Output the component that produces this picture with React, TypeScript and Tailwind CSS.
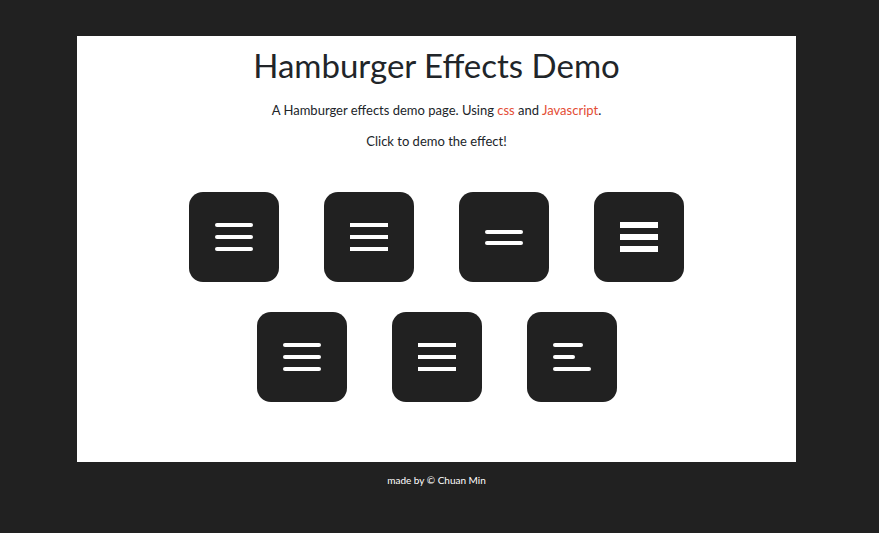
import React from "react";

type LineSpec = { w: number; h: number; rounded: boolean };

function Burger({ lines, gap }: { lines: LineSpec[]; gap: number }) {
  return (
    <button className="w-[90px] h-[90px] rounded-[14px] bg-[#212121] flex items-center justify-center">
      <div className="w-[38px] flex flex-col items-start" style={{ gap }}>
        {lines.map((l, i) => (
          <span
            key={i}
            className={l.rounded ? "block bg-white rounded-full" : "block bg-white"}
            style={{ width: l.w, height: l.h }}
          />
        ))}
      </div>
    </button>
  );
}

const r = (w = 38): LineSpec => ({ w, h: 4, rounded: true });
const s = (w = 38, h = 4): LineSpec => ({ w, h, rounded: false });

export default function App() {
  return (
    <div className="min-h-[533px] bg-[#212121]" style={{ fontFamily: 'Lato, "Noto Sans", sans-serif' }}>
      <div className="w-[873px] flex flex-col items-center pt-[36px]">
        <div className="w-[719px] h-[426px] bg-white flex flex-col items-center">
          <h1 className="mt-[9px] text-[33px] leading-[40px] text-[#212529]">Hamburger Effects Demo</h1>
          <p className="mt-[15px] text-[13px] leading-[20px] text-[#212529]">
            A Hamburger effects demo page. Using <span className="text-[#e44d34]">css</span> and{" "}
            <span className="text-[#e44d34]">Javascript</span>.
          </p>
          <p className="mt-[11px] text-[13px] leading-[20px] text-[#212529]">Click to demo the effect!</p>
          <div className="mt-[41px] flex flex-col items-center gap-[30px]">
            <div className="flex gap-[45px]">
              <Burger lines={[r(), r(), r()]} gap={8} />
              <Burger lines={[s(), s(), s()]} gap={8} />
              <Burger lines={[r(), r()]} gap={7} />
              <Burger lines={[s(38, 6), s(38, 6), s(38, 6)]} gap={6} />
            </div>
            <div className="flex gap-[45px]">
              <Burger lines={[r(), r(), r()]} gap={8} />
              <Burger lines={[s(), s(), s()]} gap={8} />
              <Burger lines={[r(30), r(22), r(38)]} gap={8} />
            </div>
          </div>
        </div>
        <p className="mt-[11px] text-[10px] leading-[14px] text-white">made by © Chuan Min</p>
      </div>
    </div>
  );
}
